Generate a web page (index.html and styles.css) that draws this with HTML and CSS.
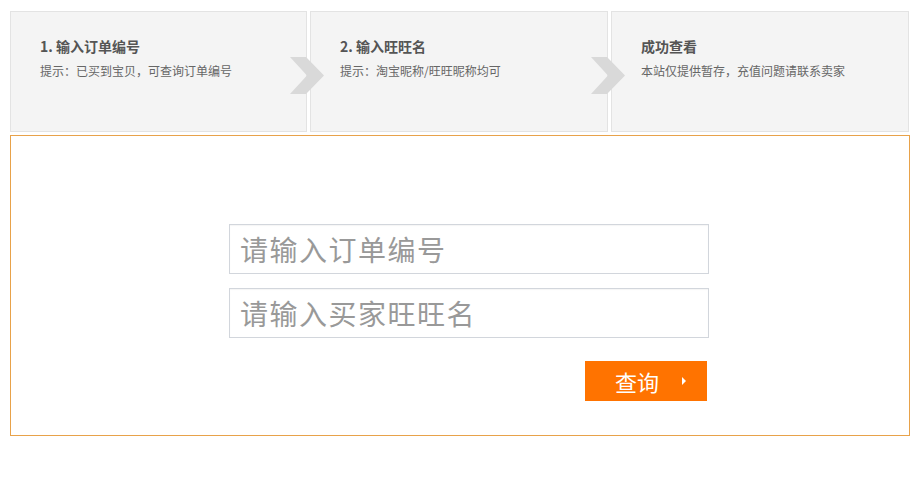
FILE: index.html
```html
<!DOCTYPE html>
<html lang="zh-CN">
<head>
<meta charset="utf-8">
<title>订单查询</title>
<link rel="stylesheet" href="styles.css">
</head>
<body>
<div class="page">
  <div class="steps">
    <div class="step">
      <div class="step-title">1. 输入订单编号</div>
      <div class="step-tip">提示：已买到宝贝，可查询订单编号</div>
      <svg class="chev" width="34" height="37" viewBox="0 0 34 37"><polygon points="0,0 16,0 34,18.5 16,37 0,37 17,18.5" fill="#d9d9d9"/></svg>
    </div>
    <div class="step">
      <div class="step-title">2. 输入旺旺名</div>
      <div class="step-tip">提示：淘宝昵称/旺旺昵称均可</div>
      <svg class="chev" width="34" height="37" viewBox="0 0 34 37"><polygon points="0,0 16,0 34,18.5 16,37 0,37 17,18.5" fill="#d9d9d9"/></svg>
    </div>
    <div class="step">
      <div class="step-title">成功查看</div>
      <div class="step-tip">本站仅提供暂存，充值问题请联系卖家</div>
    </div>
  </div>
  <div class="query-box">
    <form class="query-form">
      <input class="field" type="text" placeholder="请输入订单编号">
      <input class="field" type="text" placeholder="请输入买家旺旺名">
      <button class="btn" type="button"><span>查询</span><i class="tri"></i></button>
    </form>
  </div>
</div>
</body>
</html>
```
FILE: styles.css
```css
* { box-sizing: border-box; }
body {
  margin: 0;
  background: #fff;
  font-family: "Noto Sans CJK SC", "Noto Sans", sans-serif;
}
.page {
  padding: 11px 9px 0 10px;
  width: 919px;
}
.steps {
  display: grid;
  grid-template-columns: 297px 298px 298px;
  column-gap: 3px;
  height: 121px;
}
.step {
  position: relative;
  background: #f4f4f4;
  border: 1px solid #e3e3e3;
  padding: 24px 0 0 29px;
}
.step-title {
  font-size: 14px;
  font-weight: bold;
  color: #555;
  line-height: 20px;
}
.step-tip {
  font-size: 12px;
  color: #666;
  line-height: 18px;
  margin-top: 6px;
}
.chev {
  position: absolute;
  right: -18px;
  top: 45px;
  z-index: 2;
  display: block;
}
.query-box {
  margin-top: 3px;
  height: 301px;
  border: 1px solid #e8a24a;
  padding: 88px 0 0 218px;
}
.query-form {
  width: 480px;
  display: flex;
  flex-direction: column;
  gap: 14px;
}
.field {
  width: 480px;
  height: 50px;
  border: 1px solid #d2d6dc;
  box-shadow: inset 0 1px 1px rgba(0,0,0,0.04);
  padding: 0 10px;
  font-family: "Noto Sans CJK SC", sans-serif;
  font-size: 28px;
  letter-spacing: 1.5px;
  color: #333;
  outline: none;
}
.field::placeholder {
  color: #999;
}
.btn {
  align-self: flex-end;
  margin: 9px 2px 0 0;
  width: 122px;
  height: 40px;
  border: 0;
  background: #ff7300;
  color: #fff;
  font-family: "Noto Sans CJK SC", sans-serif;
  font-size: 22px;
  display: flex;
  align-items: center;
  padding: 0 0 0 30px;
  cursor: pointer;
}
.tri {
  display: block;
  width: 0;
  height: 0;
  border-left: 4px solid #fff;
  border-top: 4px solid transparent;
  border-bottom: 4px solid transparent;
  margin-left: 23px;
}
```
